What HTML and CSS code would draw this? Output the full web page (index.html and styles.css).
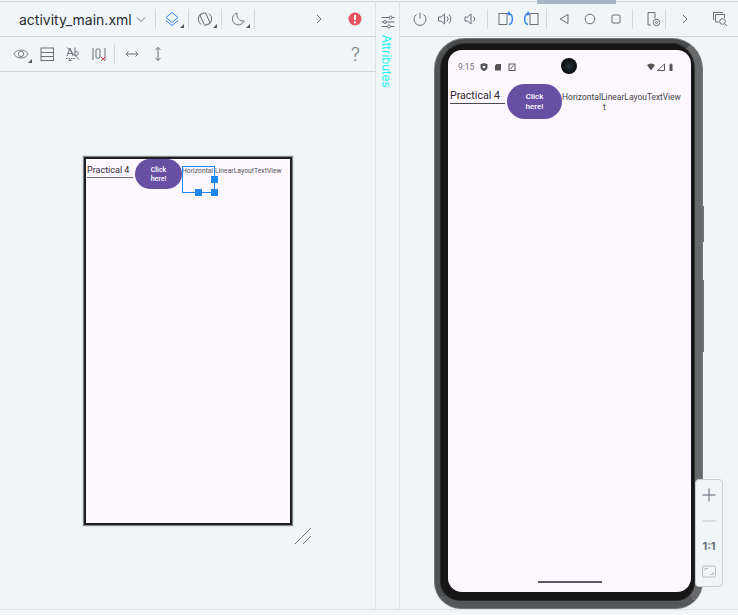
FILE: index.html
```html
<!DOCTYPE html>
<html lang="en">

<head>
    <meta charset="UTF-8">
    <title>activity_main.xml</title>
    <link rel="stylesheet" href="styles.css">
</head>

<body>
    <div class="ide">
        <section class="design">
            <div class="bar bar-file">
                <span class="file-name">activity_main.xml</span>
                <svg class="ico chev" viewBox="0 0 16 16"><path d="M4 6.500l4 4 4-4" class="ln"/></svg>
                <i class="sep sep-a"></i>
                <span class="tool has-menu"><svg class="ico" viewBox="0 0 16 16"><path d="M8 1.500l6 5-6 5-6-5z" class="blue"/><path d="M2 9.500l6 5 6-5" class="blue"/></svg></span>
                <i class="sep"></i>
                <span class="tool has-menu"><svg class="ico" viewBox="0 0 16 16"><rect x="5" y="2" width="6" height="12" rx="1.500" transform="rotate(-25 8 8)" class="ln"/><path d="M4 2.500a7 7 0 0 0 0 11M12 2.500a7 7 0 0 1 0 11" class="ln"/></svg></span>
                <i class="sep"></i>
                <span class="tool has-menu"><svg class="ico" viewBox="0 0 16 16"><path d="M7 2a6 6 0 1 0 7 8A6.500 6.500 0 0 1 7 2z" class="ln"/></svg></span>
                <i class="sep"></i>
                <span class="tool push"><svg class="ico" viewBox="0 0 16 16"><path d="M6 4l4 4-4 4" class="ln"/></svg></span>
                <span class="tool last"><svg class="ico" viewBox="0 0 16 16"><circle cx="8" cy="8" r="6.500" fill="#e5535f"/><path d="M8 4v5" stroke="#fff" stroke-width="2"/><circle cx="8" cy="11.400" r="1.100" fill="#fff"/></svg></span>
            </div>
            <div class="bar bar-view">
                <span class="tool has-menu"><svg class="ico" viewBox="0 0 18 16"><path d="M1 8c3-6 13-6 16 0-3 6-13 6-16 0z" class="ln"/><circle cx="9" cy="8" r="3" class="ln"/></svg></span>
                <span class="tool"><svg class="ico" viewBox="0 0 16 16"><rect x="2" y="2" width="12.500" height="12.500" class="ln"/><path d="M2 6.500h12.500M2 10.500h12.500" class="ln"/></svg></span>
                <span class="tool"><svg class="ico" viewBox="0 0 16 16"><path d="M2 10l3-8 3 8M3 7.500h4M10 1.500v8M10 6a2 2 0 1 1 0 3M2 1.500l12 12" class="ln"/><path d="M1 12.500h9" class="ln" stroke-dasharray="1.500 1"/><path d="M3 15l2-2 2 2z" fill="#6c7077"/></svg></span>
                <span class="tool"><svg class="ico" viewBox="0 0 16 16"><path d="M2 2v12M14 2v12" class="ln"/><rect x="5" y="3" width="4" height="9" rx="1" class="ln"/><path d="M10 11l4 4M14 11l-4 4" stroke="#d9434e" fill="none"/></svg></span>
                <i class="sep sep-b"></i>
                <span class="tool"><svg class="ico" viewBox="0 0 16 16"><path d="M2 8h12M4.500 5.500L2 8l2.500 2.500M11.500 5.500L14 8l-2.500 2.500" class="ln"/></svg></span>
                <span class="tool"><svg class="ico" viewBox="0 0 16 16"><path d="M8 1.500v13M5.500 4L8 1.500 10.500 4M5.500 12L8 14.500l2.500-2.500" class="ln"/></svg></span>
                <span class="help">?</span>
            </div>
            <div class="surface">
                <div class="blueprint">
                    <div class="layout-row">
                        <span class="plain-title">Practical 4</span>
                        <span class="pill-btn pill-small">Click here!</span>
                        <span class="small-label small-selected">Horizontal</span>
                        <span class="small-label">LinearLayout</span>
                        <span class="small-label">TextView</span>
                    </div>
                    <span class="select-box">
                        <b class="handle h-right"></b>
                        <b class="handle h-bottom"></b>
                        <b class="handle h-corner"></b>
                    </span>
                </div>
                <svg class="resize" viewBox="0 0 18 18"><path d="M1 17L17 1M9 17l8-8" stroke="#6e7378" fill="none"/></svg>
            </div>
        </section>

        <aside class="strip">
            <svg class="ico" viewBox="0 0 16 16"><path d="M1.500 3.500h13M1.500 8h13M1.500 12.500h13" class="ln"/><circle cx="10.500" cy="3.500" r="1.500" class="knob"/><circle cx="5" cy="8" r="1.500" class="knob"/><circle cx="9" cy="12.500" r="1.500" class="knob"/></svg>
            <span class="strip-label">Attributes</span>
        </aside>

        <section class="running">
            <i class="scroll-thumb"></i>
            <div class="bar bar-device">
                <span class="tool"><svg class="ico" viewBox="0 0 16 16"><path d="M8 1.500v6M4.500 3.500a6 6 0 1 0 7 0" class="ln"/></svg></span>
                <span class="tool"><svg class="ico" viewBox="0 0 16 16"><path d="M1.500 6v4h2.500l3.500 3V3L4 6zM10 5.500a3.500 3.500 0 0 1 0 5M12 3.500a6.500 6.500 0 0 1 0 9" class="ln"/></svg></span>
                <span class="tool"><svg class="ico" viewBox="0 0 16 16"><path d="M3 6v4h2.500l3.500 3V3L5.500 6zM11.500 5.500a3.500 3.500 0 0 1 0 5" class="ln"/></svg></span>
                <i class="sep sep-c"></i>
                <span class="tool"><svg class="ico" viewBox="0 0 16 16"><rect x="1" y="2.500" width="8" height="11" class="ln"/><path d="M11 2.500c4.500 1 4.500 10 0 11M11.500 .8L10 2.500l1.500 1.700" class="blue rot"/></svg></span>
                <span class="tool"><svg class="ico" viewBox="0 0 16 16"><rect x="7" y="2.500" width="8" height="11" class="ln"/><path d="M5 2.500c-4.500 1-4.500 10 0 11M4.500 .8L6 2.500 4.500 4.200" class="blue rot"/></svg></span>
                <i class="sep sep-e"></i>
                <span class="tool nav"><svg class="ico" viewBox="0 0 16 16"><path d="M12 3.500v9L4 8z" class="ln"/></svg></span>
                <span class="tool nav"><svg class="ico" viewBox="0 0 16 16"><circle cx="8" cy="8" r="4.800" class="ln"/></svg></span>
                <span class="tool nav"><svg class="ico" viewBox="0 0 16 16"><rect x="4" y="4" width="8" height="8" rx="1" class="ln"/></svg></span>
                <i class="sep sep-f"></i>
                <span class="tool"><svg class="ico" viewBox="0 0 16 16"><path d="M6 14H3V1.500h7v6" class="ln"/><circle cx="11.500" cy="11.500" r="3.200" class="ln"/><circle cx="11.500" cy="11.500" r="1" class="ln"/></svg></span>
                <i class="sep"></i>
                <span class="tool chev-device"><svg class="ico" viewBox="0 0 16 16"><path d="M6 4l4 4-4 4" class="ln"/></svg></span>
                <span class="tool snap"><svg class="ico" viewBox="0 0 16 16"><path d="M1.500 9V1.500H11M3.500 11V3.500h9V7M3.500 11H7" class="ln"/><circle cx="10.500" cy="10.500" r="2.800" class="ln"/><path d="M12.500 12.500l2.500 2.500" class="ln"/></svg></span>
            </div>
            <div class="stage">
                <div class="phone">
                    <i class="side-btn btn-power"></i>
                    <i class="side-btn btn-volume"></i>
                    <div class="screen">
                        <div class="status">
                            <span class="clock">9:15</span>
                            <svg class="stat" viewBox="0 0 8 8"><path d="M4 0l3.500 1.200V4c0 2-1.500 3.500-3.500 4C2 7.500.5 6 .5 4V1.200z" fill="#555"/><circle cx="4" cy="4" r="1.300" fill="#fff"/></svg>
                            <svg class="stat" viewBox="0 0 8 8"><path d="M2.500 1H7v6.500H1V2.500z" fill="#555"/></svg>
                            <svg class="stat" viewBox="0 0 8 8"><rect x="1" y="1" width="6" height="6.500" fill="none" stroke="#555"/><path d="M2.500 6L5.500 2.500" stroke="#555"/></svg>
                            <span class="stat-right">
                                <svg class="stat" viewBox="0 0 8 8"><path d="M0 2a6 6 0 0 1 8 0L4 7.500z" fill="#555"/></svg>
                                <svg class="stat" viewBox="0 0 8 8"><path d="M7.500 1v6.500H.5z" fill="none" stroke="#555"/></svg>
                                <svg class="stat" viewBox="0 0 8 8"><path d="M2.500 1.200h1V.4h1v.8h1v6.800h-3z" fill="#555"/></svg>
                            </span>
                        </div>
                        <i class="camera"></i>
                        <div class="app-row">
                            <span class="edit-title">Practical 4</span>
                            <span class="pill-btn pill-large">Click here!</span>
                            <span class="wrap-label">HorizontalLinearLayout</span>
                            <span class="text-view">TextView</span>
                        </div>
                        <i class="home-pill"></i>
                    </div>
                </div>
                <div class="zoom-box">
                    <svg class="zoom-ico" viewBox="0 0 14 14"><path d="M7 .5v13M.5 7h13" stroke="#5f6775" fill="none"/></svg>
                    <svg class="zoom-ico" viewBox="0 0 14 14"><path d="M.5 7h13" stroke="#bfc5cb" fill="none"/></svg>
                    <span class="zoom-text">1:1</span>
                    <svg class="zoom-ico" viewBox="0 0 14 14"><rect x=".5" y="1" width="13" height="11" rx="1.500" fill="none" stroke="#b5bbc1"/><path d="M3 5.500V3.500h3M11 7v2.500H8" fill="none" stroke="#b5bbc1"/></svg>
                </div>
            </div>
        </section>
    </div>
</body>

</html>
```

FILE: styles.css
```css
* {
    box-sizing: border-box;
}

html,
body {
    margin: 0;
    height: 100%;
}

body {
    background: #f0f5f8;
    font-family: "Inter", "Liberation Sans", sans-serif;
    overflow: hidden;
}

i,
b {
    display: block;
}

.ide {
    display: grid;
    grid-template-columns: 376px 24px 338px;
    width: 738px;
    height: 610px;
    border-bottom: 1px solid #dbe0e4;
}

/* svg helpers */
.ln {
    fill: none;
    stroke: #6c7077;
    stroke-width: 1;
}

.blue {
    fill: none;
    stroke: #3d82e8;
    stroke-width: 1;
}

.rot {
    stroke: #2f7ff0;
    stroke-width: 1.400;
}

.knob {
    fill: #f0f5f8;
    stroke: #6c7077;
}

.ico {
    width: 16px;
    height: 16px;
    display: block;
}

/* toolbars */
.bar {
    display: flex;
    align-items: center;
    border-bottom: 1px solid #d3d7db;
}

.tool {
    position: relative;
    width: 26px;
    height: 18px;
    display: flex;
    align-items: center;
    justify-content: center;
    flex: none;
}

.has-menu::after {
    content: "";
    position: absolute;
    right: 2px;
    bottom: 0;
    border: 2px solid transparent;
    border-right-color: #555;
    border-bottom-color: #555;
}

.sep {
    width: 1px;
    height: 20px;
    background: #d3d7db;
    flex: none;
}

.design {
    display: flex;
    flex-direction: column;
    border-right: 1px solid #dbe0e4;
    border-top: 1px solid #d3d7db;
    margin-top: 1px;
}

.bar-file {
    height: 35px;
    padding-left: 19px;
}

.file-name {
    width: 113px;
    font-size: 14px;
    color: #2b2d30;
    white-space: nowrap;
}

.chev {
    margin-left: 1px;
}

.bar-file .tool {
    width: 28px;
}

.bar-file .sep {
    margin-left: 2px;
    margin-right: 2px;
}

.bar-file .sep-a {
    margin-left: 6px;
}

.bar-file .push {
    margin-left: 48px;
}

.bar-file .last {
    margin-left: 8px;
}

.bar-view {
    height: 35px;
    padding-left: 8px;
}

.sep-b {
    margin: 0 4px 0 2px;
}

.help {
    margin-left: auto;
    margin-right: 15px;
    font-size: 18px;
    font-weight: 300;
    color: #7d8288;
}

.surface {
    position: relative;
    flex: 1;
    padding: 85px 0 0 84px;
}

.blueprint {
    position: relative;
    width: 208px;
    height: 368px;
    background: #fdf7ff;
    border: 2px solid #1e1f21;
    box-shadow: 0 0 1px 1px #85898d;
}

.layout-row {
    display: flex;
    align-items: flex-start;
}

.plain-title {
    width: 46px;
    margin-left: 1px;
    margin-top: 6px;
    padding-bottom: 2px;
    border-bottom: 1px solid #6a6a70;
    font: 9px "Roboto", sans-serif;
    color: #2e2c32;
    white-space: nowrap;
}

.pill-btn {
    display: flex;
    align-items: center;
    justify-content: center;
    text-align: center;
    background: #6750a4;
    color: #fff;
    font-family: "Roboto", sans-serif;
    font-weight: 500;
    flex: none;
}

.pill-small {
    width: 47px;
    height: 30px;
    margin-left: 2px;
    padding: 2px 12px 0;
    border-radius: 15px;
    font-size: 7px;
    line-height: 9px;
}

.small-label {
    margin-top: 8px;
    font: 6.800px "Roboto", sans-serif;
    color: #55535a;
    white-space: nowrap;
}

.small-selected {
    width: 33px;
    overflow: hidden;
}

.select-box {
    position: absolute;
    left: 96px;
    top: 7px;
    width: 33px;
    height: 27px;
    border: 1px solid #1e88f2;
}

.handle {
    position: absolute;
    width: 7px;
    height: 7px;
    background: #1e88f2;
}

.h-right {
    right: -4px;
    top: 9px;
}

.h-bottom {
    left: 12px;
    bottom: -4px;
}

.h-corner {
    right: -4px;
    bottom: -4px;
}

.resize {
    position: absolute;
    left: 294px;
    top: 455px;
    width: 18px;
    height: 18px;
}

/* attributes strip */
.strip {
    display: flex;
    flex-direction: column;
    align-items: center;
    gap: 5px;
    padding-top: 12px;
    border-right: 1px solid #dbe0e4;
    margin-top: 1px;
    border-top: 1px solid #d3d7db;
}

.strip-label {
    writing-mode: vertical-rl;
    font-size: 11.500px;
    color: #19f5f5;
    margin-left: -3px;
}

/* running device */
.running {
    position: relative;
    display: flex;
    flex-direction: column;
    margin-top: 1px;
    border-top: 1px solid #d3d7db;
}

.scroll-thumb {
    position: absolute;
    left: 137px;
    top: -2px;
    width: 79px;
    height: 4px;
    background: #a9b4c6;
}

.bar-device {
    height: 35px;
    padding-left: 7px;
}

.bar-device .tool {
    width: 25px;
}

.bar-device .nav {
    width: 26px;
}

.sep-c {
    margin: 0 5px;
}

.sep-e {
    margin: 0 4px 0 3px;
}

.sep-f {
    margin: 0 7px 0 3px;
}

.bar-device .chev-device {
    margin-left: 6px;
}

.bar-device .snap {
    margin-left: 10px;
}

.stage {
    position: relative;
    flex: 1;
    padding: 2px 0 0 35px;
}

.phone {
    position: relative;
    width: 267px;
    height: 569px;
    padding: 7px 4px 9px 8px;
    background: #161616;
    border-style: solid;
    border-width: 4px 7px 7px 5px;
    border-color: #48494b #68696b #55575a #4f5153;
    border-radius: 30px 30px 26px 26px;
    box-shadow: inset 0 0 0 1px #2a2a2a, 0 0 0 1px #77797b;
}

.side-btn {
    position: absolute;
    right: -9px;
    width: 2px;
    background: #6f7173;
}

.btn-power {
    top: 163px;
    height: 36px;
}

.btn-volume {
    top: 237px;
    height: 72px;
}

.screen {
    position: relative;
    display: flex;
    flex-direction: column;
    height: 100%;
    background: #fdf7ff;
    border-radius: 14px;
    padding: 0 2px 9px;
}

.status {
    display: flex;
    align-items: center;
    gap: 6px;
    height: 34px;
    padding: 0 14px 0 8px;
    font: 8.500px "Roboto", sans-serif;
    color: #77757c;
}

.stat {
    width: 8px;
    height: 8px;
    display: block;
}

.stat-right {
    display: flex;
    gap: 2px;
    margin-left: auto;
}

.camera {
    position: absolute;
    left: 113px;
    top: 8px;
    width: 16px;
    height: 16px;
    border-radius: 50%;
    background: radial-gradient(circle, #28343c 0, #0d0e10 60%);
}

.app-row {
    display: flex;
    align-items: flex-start;
}

.edit-title {
    width: 55px;
    margin-top: 5px;
    border-bottom: 1px solid #4a4850;
    font: 10.600px "Roboto", sans-serif;
    line-height: 14px;
    color: #2a282e;
    white-space: nowrap;
}

.pill-large {
    width: 55px;
    height: 35px;
    margin-left: 2px;
    padding: 1px 15px 0;
    border-radius: 18px;
    font-size: 8px;
    line-height: 10px;
}

.wrap-label {
    width: 85px;
    margin-top: 8px;
    font: 8.500px "Roboto", sans-serif;
    line-height: 10px;
    color: #46444a;
    text-align: center;
    word-break: break-all;
}

.text-view {
    margin-top: 8px;
    font: 8.300px "Roboto", sans-serif;
    line-height: 10px;
    color: #46444a;
}

.home-pill {
    width: 64px;
    height: 2px;
    margin: auto auto 0;
    background: #5a5a5e;
}

.zoom-box {
    position: absolute;
    left: 295px;
    top: 442px;
    width: 28px;
    height: 108px;
    display: flex;
    flex-direction: column;
    align-items: center;
    justify-content: space-between;
    padding: 8px 0 7px;
    background: #f0f5f8;
    border: 1px solid #c9ced3;
    border-radius: 4px;
}

.zoom-ico {
    width: 14px;
    height: 14px;
    display: block;
}

.zoom-text {
    font: bold 11px "Inter", sans-serif;
    color: #6c7077;
}
```
